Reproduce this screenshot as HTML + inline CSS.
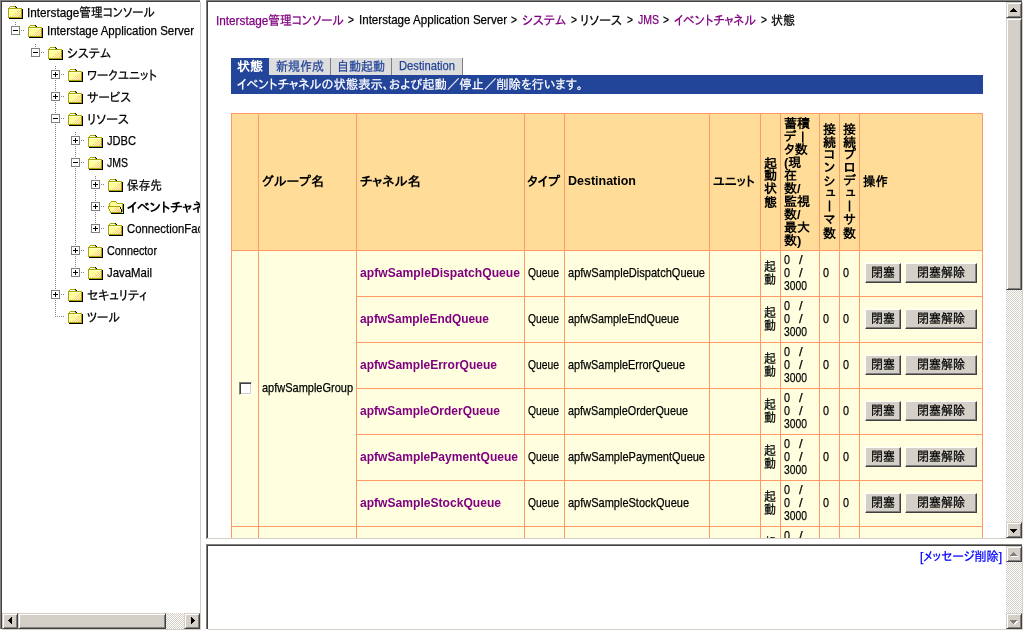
<!DOCTYPE html>
<html lang="ja"><head><meta charset="utf-8"><title>Interstage管理コンソール</title>
<style>
html,body{margin:0;padding:0}
body{width:1024px;height:630px;position:relative;overflow:hidden;background:#fff;
 font-family:"Liberation Sans","IPAPGothic","IPAGothic",sans-serif;font-size:13px;line-height:13px;color:#000}
.frame{position:absolute;overflow:hidden;background:#fff}
.view{position:absolute;overflow:hidden}
.r{position:absolute}
.t{position:absolute;white-space:nowrap;line-height:13px;font-size:13px;transform-origin:0 0}
.frame{will-change:transform}
.t{-webkit-text-stroke:0.25px}
.b{font-weight:bold;-webkit-text-stroke:0}
.v{writing-mode:vertical-rl;line-height:13px;letter-spacing:0;font-family:"Liberation Sans","IPAGothic",sans-serif}
.vv{display:inline-block;writing-mode:vertical-rl;line-height:13px;vertical-align:top}
.ic{position:absolute}
.vd{position:absolute;width:1px;background:repeating-linear-gradient(to bottom,#808080 0,#808080 1px,transparent 1px,transparent 2px)}
.hd{position:absolute;height:1px;background:repeating-linear-gradient(to right,#808080 0,#808080 1px,transparent 1px,transparent 2px)}
.bx{position:absolute;width:7px;height:7px;border:1px solid #808080;background:#fff}
.bx i{position:absolute;left:1px;top:3px;width:5px;height:1px;background:#000}
.bx b{position:absolute;left:3px;top:1px;width:1px;height:5px;background:#000}
.sb{position:absolute;background:#d4d0c8;border:1px solid;border-color:#d4d0c8 #404040 #404040 #d4d0c8;box-shadow:inset 1px 1px 0 #fff,inset -1px -1px 0 #808080}
.sb svg{position:absolute;left:0;top:0}
.tr{position:absolute;background:repeating-conic-gradient(#fff 0 25%,#d4d0c8 0 50%) 0 0/2px 2px}
.btn{position:absolute;box-sizing:border-box;margin:0;padding:0;font:inherit;color:#000;appearance:none;-webkit-appearance:none;border-radius:0;overflow:hidden;background:#d4d0c8;border:1px solid;border-color:#fff #404040 #404040 #fff;box-shadow:inset -1px -1px 0 #808080}
a{text-decoration:none;color:inherit}
.cb{position:absolute;box-sizing:content-box;margin:0;padding:0;appearance:none;-webkit-appearance:none;border-radius:0;width:11px;height:11px;background:#fff;border:1px solid;border-color:#808080 #fff #fff #808080;box-shadow:inset 1px 1px 0 #404040,inset -1px -1px 0 #d4d0c8}
</style></head>
<body>
<div class="frame" style="left:0;top:0;width:202px;height:630px">
<div class="r" style="left:0px;top:0px;width:200px;height:1px;background:#808080;"></div>
<div class="r" style="left:0px;top:0px;width:1px;height:629px;background:#808080;"></div>
<div class="r" style="left:1px;top:1px;width:199px;height:1px;background:#404040;"></div>
<div class="r" style="left:1px;top:1px;width:1px;height:628px;background:#404040;"></div>
<div class="r" style="left:200px;top:2px;width:1px;height:628px;background:#d4d0c8;"></div>
<div class="r" style="left:2px;top:629px;width:199px;height:1px;background:#d4d0c8;"></div>
<div class="view" style="left:2px;top:2px;width:198px;height:611px">
<div class="vd" style="left:13px;top:20px;height:9px"></div>
<div class="vd" style="left:33px;top:42px;height:9px"></div>
<div class="vd" style="left:53px;top:64px;height:251px"></div>
<div class="vd" style="left:73px;top:130px;height:141px"></div>
<div class="vd" style="left:93px;top:174px;height:53px"></div>
<svg class="ic" style="left:6px;top:4px" width="15" height="13" viewBox="0 0 15 13" shape-rendering="crispEdges"><rect x="2" y="0" width="5" height="1" fill="#a8a800"/><rect x="7" y="0" width="1" height="1" fill="#000"/><rect x="1" y="1" width="1" height="1" fill="#a8a800"/><rect x="2" y="1" width="5" height="1" fill="#ffffe8"/><rect x="7" y="1" width="1" height="1" fill="#a8a800"/><rect x="8" y="1" width="1" height="1" fill="#000"/><rect x="0" y="2" width="14" height="10" fill="#a8a800"/><rect x="1" y="3" width="12" height="8" fill="#ffff99"/><rect x="1" y="3" width="12" height="1" fill="#ffffd0"/><rect x="1" y="3" width="1" height="8" fill="#ffffd0"/><path d="M12 4h1v1h-1zM9 5h1v1h-1zM11 5h1v1h-1zM10 6h1v1h-1zM12 6h1v1h-1zM7 7h1v1h-1zM9 7h1v1h-1zM11 7h1v1h-1zM8 8h1v1h-1zM10 8h1v1h-1zM12 8h1v1h-1zM5 9h1v1h-1zM7 9h1v1h-1zM9 9h1v1h-1zM11 9h2v1h-2zM2 10h1v1h-1zM4 10h1v1h-1zM6 10h1v1h-1zM8 10h1v1h-1zM10 10h3v1h-3z" fill="#ffcc99"/><rect x="14" y="3" width="1" height="10" fill="#000"/><rect x="1" y="12" width="14" height="1" fill="#000"/></svg>
<span class="t" style="left:25px;top:4px;transform:scaleX(0.9043);">Interstage管理コンソール</span>
<div class="hd" style="left:19px;top:28px;width:3px"></div>
<div class="bx" style="left:9px;top:24px"><i></i></div>
<svg class="ic" style="left:26px;top:23px" width="15" height="13" viewBox="0 0 15 13" shape-rendering="crispEdges"><rect x="2" y="0" width="5" height="1" fill="#a8a800"/><rect x="7" y="0" width="1" height="1" fill="#000"/><rect x="1" y="1" width="1" height="1" fill="#a8a800"/><rect x="2" y="1" width="5" height="1" fill="#ffffe8"/><rect x="7" y="1" width="1" height="1" fill="#a8a800"/><rect x="8" y="1" width="1" height="1" fill="#000"/><rect x="0" y="2" width="14" height="10" fill="#a8a800"/><rect x="1" y="3" width="12" height="8" fill="#ffff99"/><rect x="1" y="3" width="12" height="1" fill="#ffffd0"/><rect x="1" y="3" width="1" height="8" fill="#ffffd0"/><path d="M12 4h1v1h-1zM9 5h1v1h-1zM11 5h1v1h-1zM10 6h1v1h-1zM12 6h1v1h-1zM7 7h1v1h-1zM9 7h1v1h-1zM11 7h1v1h-1zM8 8h1v1h-1zM10 8h1v1h-1zM12 8h1v1h-1zM5 9h1v1h-1zM7 9h1v1h-1zM9 9h1v1h-1zM11 9h2v1h-2zM2 10h1v1h-1zM4 10h1v1h-1zM6 10h1v1h-1zM8 10h1v1h-1zM10 10h3v1h-3z" fill="#ffcc99"/><rect x="14" y="3" width="1" height="10" fill="#000"/><rect x="1" y="12" width="14" height="1" fill="#000"/></svg>
<span class="t" style="left:45px;top:22px;transform:scaleX(0.8844);">Interstage Application Server</span>
<div class="hd" style="left:39px;top:50px;width:3px"></div>
<div class="bx" style="left:29px;top:46px"><i></i></div>
<svg class="ic" style="left:46px;top:45px" width="15" height="13" viewBox="0 0 15 13" shape-rendering="crispEdges"><rect x="2" y="0" width="5" height="1" fill="#a8a800"/><rect x="7" y="0" width="1" height="1" fill="#000"/><rect x="1" y="1" width="1" height="1" fill="#a8a800"/><rect x="2" y="1" width="5" height="1" fill="#ffffe8"/><rect x="7" y="1" width="1" height="1" fill="#a8a800"/><rect x="8" y="1" width="1" height="1" fill="#000"/><rect x="0" y="2" width="14" height="10" fill="#a8a800"/><rect x="1" y="3" width="12" height="8" fill="#ffff99"/><rect x="1" y="3" width="12" height="1" fill="#ffffd0"/><rect x="1" y="3" width="1" height="8" fill="#ffffd0"/><path d="M12 4h1v1h-1zM9 5h1v1h-1zM11 5h1v1h-1zM10 6h1v1h-1zM12 6h1v1h-1zM7 7h1v1h-1zM9 7h1v1h-1zM11 7h1v1h-1zM8 8h1v1h-1zM10 8h1v1h-1zM12 8h1v1h-1zM5 9h1v1h-1zM7 9h1v1h-1zM9 9h1v1h-1zM11 9h2v1h-2zM2 10h1v1h-1zM4 10h1v1h-1zM6 10h1v1h-1zM8 10h1v1h-1zM10 10h3v1h-3z" fill="#ffcc99"/><rect x="14" y="3" width="1" height="10" fill="#000"/><rect x="1" y="12" width="14" height="1" fill="#000"/></svg>
<span class="t" style="left:65px;top:45px;transform:scaleX(0.9428);">システム</span>
<div class="hd" style="left:59px;top:72px;width:3px"></div>
<div class="bx" style="left:49px;top:68px"><i></i><b></b></div>
<svg class="ic" style="left:66px;top:67px" width="15" height="13" viewBox="0 0 15 13" shape-rendering="crispEdges"><rect x="2" y="0" width="5" height="1" fill="#a8a800"/><rect x="7" y="0" width="1" height="1" fill="#000"/><rect x="1" y="1" width="1" height="1" fill="#a8a800"/><rect x="2" y="1" width="5" height="1" fill="#ffffe8"/><rect x="7" y="1" width="1" height="1" fill="#a8a800"/><rect x="8" y="1" width="1" height="1" fill="#000"/><rect x="0" y="2" width="14" height="10" fill="#a8a800"/><rect x="1" y="3" width="12" height="8" fill="#ffff99"/><rect x="1" y="3" width="12" height="1" fill="#ffffd0"/><rect x="1" y="3" width="1" height="8" fill="#ffffd0"/><path d="M12 4h1v1h-1zM9 5h1v1h-1zM11 5h1v1h-1zM10 6h1v1h-1zM12 6h1v1h-1zM7 7h1v1h-1zM9 7h1v1h-1zM11 7h1v1h-1zM8 8h1v1h-1zM10 8h1v1h-1zM12 8h1v1h-1zM5 9h1v1h-1zM7 9h1v1h-1zM9 9h1v1h-1zM11 9h2v1h-2zM2 10h1v1h-1zM4 10h1v1h-1zM6 10h1v1h-1zM8 10h1v1h-1zM10 10h3v1h-3z" fill="#ffcc99"/><rect x="14" y="3" width="1" height="10" fill="#000"/><rect x="1" y="12" width="14" height="1" fill="#000"/></svg>
<span class="t" style="left:85px;top:67px;transform:scaleX(0.9220);">ワークユニット</span>
<div class="hd" style="left:59px;top:94px;width:3px"></div>
<div class="bx" style="left:49px;top:90px"><i></i><b></b></div>
<svg class="ic" style="left:66px;top:89px" width="15" height="13" viewBox="0 0 15 13" shape-rendering="crispEdges"><rect x="2" y="0" width="5" height="1" fill="#a8a800"/><rect x="7" y="0" width="1" height="1" fill="#000"/><rect x="1" y="1" width="1" height="1" fill="#a8a800"/><rect x="2" y="1" width="5" height="1" fill="#ffffe8"/><rect x="7" y="1" width="1" height="1" fill="#a8a800"/><rect x="8" y="1" width="1" height="1" fill="#000"/><rect x="0" y="2" width="14" height="10" fill="#a8a800"/><rect x="1" y="3" width="12" height="8" fill="#ffff99"/><rect x="1" y="3" width="12" height="1" fill="#ffffd0"/><rect x="1" y="3" width="1" height="8" fill="#ffffd0"/><path d="M12 4h1v1h-1zM9 5h1v1h-1zM11 5h1v1h-1zM10 6h1v1h-1zM12 6h1v1h-1zM7 7h1v1h-1zM9 7h1v1h-1zM11 7h1v1h-1zM8 8h1v1h-1zM10 8h1v1h-1zM12 8h1v1h-1zM5 9h1v1h-1zM7 9h1v1h-1zM9 9h1v1h-1zM11 9h2v1h-2zM2 10h1v1h-1zM4 10h1v1h-1zM6 10h1v1h-1zM8 10h1v1h-1zM10 10h3v1h-3z" fill="#ffcc99"/><rect x="14" y="3" width="1" height="10" fill="#000"/><rect x="1" y="12" width="14" height="1" fill="#000"/></svg>
<span class="t" style="left:85px;top:89px;transform:scaleX(0.9170);">サービス</span>
<div class="hd" style="left:59px;top:116px;width:3px"></div>
<div class="bx" style="left:49px;top:112px"><i></i></div>
<svg class="ic" style="left:66px;top:111px" width="15" height="13" viewBox="0 0 15 13" shape-rendering="crispEdges"><rect x="2" y="0" width="5" height="1" fill="#a8a800"/><rect x="7" y="0" width="1" height="1" fill="#000"/><rect x="1" y="1" width="1" height="1" fill="#a8a800"/><rect x="2" y="1" width="5" height="1" fill="#ffffe8"/><rect x="7" y="1" width="1" height="1" fill="#a8a800"/><rect x="8" y="1" width="1" height="1" fill="#000"/><rect x="0" y="2" width="14" height="10" fill="#a8a800"/><rect x="1" y="3" width="12" height="8" fill="#ffff99"/><rect x="1" y="3" width="12" height="1" fill="#ffffd0"/><rect x="1" y="3" width="1" height="8" fill="#ffffd0"/><path d="M12 4h1v1h-1zM9 5h1v1h-1zM11 5h1v1h-1zM10 6h1v1h-1zM12 6h1v1h-1zM7 7h1v1h-1zM9 7h1v1h-1zM11 7h1v1h-1zM8 8h1v1h-1zM10 8h1v1h-1zM12 8h1v1h-1zM5 9h1v1h-1zM7 9h1v1h-1zM9 9h1v1h-1zM11 9h2v1h-2zM2 10h1v1h-1zM4 10h1v1h-1zM6 10h1v1h-1zM8 10h1v1h-1zM10 10h3v1h-3z" fill="#ffcc99"/><rect x="14" y="3" width="1" height="10" fill="#000"/><rect x="1" y="12" width="14" height="1" fill="#000"/></svg>
<span class="t" style="left:85px;top:111px;transform:scaleX(0.9529);">リソース</span>
<div class="hd" style="left:79px;top:138px;width:3px"></div>
<div class="bx" style="left:69px;top:134px"><i></i><b></b></div>
<svg class="ic" style="left:86px;top:133px" width="15" height="13" viewBox="0 0 15 13" shape-rendering="crispEdges"><rect x="2" y="0" width="5" height="1" fill="#a8a800"/><rect x="7" y="0" width="1" height="1" fill="#000"/><rect x="1" y="1" width="1" height="1" fill="#a8a800"/><rect x="2" y="1" width="5" height="1" fill="#ffffe8"/><rect x="7" y="1" width="1" height="1" fill="#a8a800"/><rect x="8" y="1" width="1" height="1" fill="#000"/><rect x="0" y="2" width="14" height="10" fill="#a8a800"/><rect x="1" y="3" width="12" height="8" fill="#ffff99"/><rect x="1" y="3" width="12" height="1" fill="#ffffd0"/><rect x="1" y="3" width="1" height="8" fill="#ffffd0"/><path d="M12 4h1v1h-1zM9 5h1v1h-1zM11 5h1v1h-1zM10 6h1v1h-1zM12 6h1v1h-1zM7 7h1v1h-1zM9 7h1v1h-1zM11 7h1v1h-1zM8 8h1v1h-1zM10 8h1v1h-1zM12 8h1v1h-1zM5 9h1v1h-1zM7 9h1v1h-1zM9 9h1v1h-1zM11 9h2v1h-2zM2 10h1v1h-1zM4 10h1v1h-1zM6 10h1v1h-1zM8 10h1v1h-1zM10 10h3v1h-3z" fill="#ffcc99"/><rect x="14" y="3" width="1" height="10" fill="#000"/><rect x="1" y="12" width="14" height="1" fill="#000"/></svg>
<span class="t" style="left:105px;top:132px;transform:scaleX(0.8541);">JDBC</span>
<div class="hd" style="left:79px;top:160px;width:3px"></div>
<div class="bx" style="left:69px;top:156px"><i></i></div>
<svg class="ic" style="left:86px;top:155px" width="15" height="13" viewBox="0 0 15 13" shape-rendering="crispEdges"><rect x="2" y="0" width="5" height="1" fill="#a8a800"/><rect x="7" y="0" width="1" height="1" fill="#000"/><rect x="1" y="1" width="1" height="1" fill="#a8a800"/><rect x="2" y="1" width="5" height="1" fill="#ffffe8"/><rect x="7" y="1" width="1" height="1" fill="#a8a800"/><rect x="8" y="1" width="1" height="1" fill="#000"/><rect x="0" y="2" width="14" height="10" fill="#a8a800"/><rect x="1" y="3" width="12" height="8" fill="#ffff99"/><rect x="1" y="3" width="12" height="1" fill="#ffffd0"/><rect x="1" y="3" width="1" height="8" fill="#ffffd0"/><path d="M12 4h1v1h-1zM9 5h1v1h-1zM11 5h1v1h-1zM10 6h1v1h-1zM12 6h1v1h-1zM7 7h1v1h-1zM9 7h1v1h-1zM11 7h1v1h-1zM8 8h1v1h-1zM10 8h1v1h-1zM12 8h1v1h-1zM5 9h1v1h-1zM7 9h1v1h-1zM9 9h1v1h-1zM11 9h2v1h-2zM2 10h1v1h-1zM4 10h1v1h-1zM6 10h1v1h-1zM8 10h1v1h-1zM10 10h3v1h-3z" fill="#ffcc99"/><rect x="14" y="3" width="1" height="10" fill="#000"/><rect x="1" y="12" width="14" height="1" fill="#000"/></svg>
<span class="t" style="left:105px;top:154px;transform:scaleX(0.8077);">JMS</span>
<div class="hd" style="left:99px;top:182px;width:3px"></div>
<div class="bx" style="left:89px;top:178px"><i></i><b></b></div>
<svg class="ic" style="left:106px;top:177px" width="15" height="13" viewBox="0 0 15 13" shape-rendering="crispEdges"><rect x="2" y="0" width="5" height="1" fill="#a8a800"/><rect x="7" y="0" width="1" height="1" fill="#000"/><rect x="1" y="1" width="1" height="1" fill="#a8a800"/><rect x="2" y="1" width="5" height="1" fill="#ffffe8"/><rect x="7" y="1" width="1" height="1" fill="#a8a800"/><rect x="8" y="1" width="1" height="1" fill="#000"/><rect x="0" y="2" width="14" height="10" fill="#a8a800"/><rect x="1" y="3" width="12" height="8" fill="#ffff99"/><rect x="1" y="3" width="12" height="1" fill="#ffffd0"/><rect x="1" y="3" width="1" height="8" fill="#ffffd0"/><path d="M12 4h1v1h-1zM9 5h1v1h-1zM11 5h1v1h-1zM10 6h1v1h-1zM12 6h1v1h-1zM7 7h1v1h-1zM9 7h1v1h-1zM11 7h1v1h-1zM8 8h1v1h-1zM10 8h1v1h-1zM12 8h1v1h-1zM5 9h1v1h-1zM7 9h1v1h-1zM9 9h1v1h-1zM11 9h2v1h-2zM2 10h1v1h-1zM4 10h1v1h-1zM6 10h1v1h-1zM8 10h1v1h-1zM10 10h3v1h-3z" fill="#ffcc99"/><rect x="14" y="3" width="1" height="10" fill="#000"/><rect x="1" y="12" width="14" height="1" fill="#000"/></svg>
<span class="t" style="left:125px;top:177px;transform:scaleX(0.8974);">保存先</span>
<div class="hd" style="left:99px;top:204px;width:3px"></div>
<div class="bx" style="left:89px;top:200px"><i></i><b></b></div>
<svg class="ic" style="left:106px;top:199px" width="16" height="13" viewBox="0 0 16 13" shape-rendering="crispEdges"><path d="M3 0h5v1h-5zM2 1h1v1h-1zM8 1h1v1h-1zM1 2h1v3h-1zM9 2h6v1h-6zM14 3h1v8h-1z" fill="#a8a800"/><path d="M3 1h5v1h-5zM2 2h7v3h-7zM9 3h5v8h-5z" fill="#ffff99"/><rect x="9" y="3" width="5" height="1" fill="#ffffe8"/><path d="M0 5h12v1h-12zM0 6h1v2h-1zM1 8h1v2h-1zM2 10h1v1h-1zM2 11h12v1h-12z" fill="#a8a800"/><path d="M1 6h11v2h-11zM2 8h11v2h-11zM3 10h10v1h-10z" fill="#ffff99"/><path d="M8 6h1v1h-1zM10 6h1v1h-1zM7 7h1v1h-1zM9 7h1v1h-1zM6 8h1v1h-1zM8 8h1v1h-1zM10 8h2v1h-2zM5 9h1v1h-1zM7 9h1v1h-1zM9 9h3v1h-3zM4 10h1v1h-1zM6 10h1v1h-1zM8 10h4v1h-4z" fill="#ffcc99"/><path d="M12 6h1v2h-1zM13 8h1v2h-1zM13 10h1v1h-1zM15 3h1v10h-1zM3 12h13v1h-13z" fill="#000"/></svg>
<span class="t b" style="left:125px;top:199px;transform:scaleX(1.0107);">イベントチャネル</span>
<div class="hd" style="left:99px;top:226px;width:3px"></div>
<div class="bx" style="left:89px;top:222px"><i></i><b></b></div>
<svg class="ic" style="left:106px;top:221px" width="15" height="13" viewBox="0 0 15 13" shape-rendering="crispEdges"><rect x="2" y="0" width="5" height="1" fill="#a8a800"/><rect x="7" y="0" width="1" height="1" fill="#000"/><rect x="1" y="1" width="1" height="1" fill="#a8a800"/><rect x="2" y="1" width="5" height="1" fill="#ffffe8"/><rect x="7" y="1" width="1" height="1" fill="#a8a800"/><rect x="8" y="1" width="1" height="1" fill="#000"/><rect x="0" y="2" width="14" height="10" fill="#a8a800"/><rect x="1" y="3" width="12" height="8" fill="#ffff99"/><rect x="1" y="3" width="12" height="1" fill="#ffffd0"/><rect x="1" y="3" width="1" height="8" fill="#ffffd0"/><path d="M12 4h1v1h-1zM9 5h1v1h-1zM11 5h1v1h-1zM10 6h1v1h-1zM12 6h1v1h-1zM7 7h1v1h-1zM9 7h1v1h-1zM11 7h1v1h-1zM8 8h1v1h-1zM10 8h1v1h-1zM12 8h1v1h-1zM5 9h1v1h-1zM7 9h1v1h-1zM9 9h1v1h-1zM11 9h2v1h-2zM2 10h1v1h-1zM4 10h1v1h-1zM6 10h1v1h-1zM8 10h1v1h-1zM10 10h3v1h-3z" fill="#ffcc99"/><rect x="14" y="3" width="1" height="10" fill="#000"/><rect x="1" y="12" width="14" height="1" fill="#000"/></svg>
<span class="t" style="left:125px;top:220px;transform:scaleX(0.8706);">ConnectionFactory</span>
<div class="hd" style="left:79px;top:248px;width:3px"></div>
<div class="bx" style="left:69px;top:244px"><i></i><b></b></div>
<svg class="ic" style="left:86px;top:243px" width="15" height="13" viewBox="0 0 15 13" shape-rendering="crispEdges"><rect x="2" y="0" width="5" height="1" fill="#a8a800"/><rect x="7" y="0" width="1" height="1" fill="#000"/><rect x="1" y="1" width="1" height="1" fill="#a8a800"/><rect x="2" y="1" width="5" height="1" fill="#ffffe8"/><rect x="7" y="1" width="1" height="1" fill="#a8a800"/><rect x="8" y="1" width="1" height="1" fill="#000"/><rect x="0" y="2" width="14" height="10" fill="#a8a800"/><rect x="1" y="3" width="12" height="8" fill="#ffff99"/><rect x="1" y="3" width="12" height="1" fill="#ffffd0"/><rect x="1" y="3" width="1" height="8" fill="#ffffd0"/><path d="M12 4h1v1h-1zM9 5h1v1h-1zM11 5h1v1h-1zM10 6h1v1h-1zM12 6h1v1h-1zM7 7h1v1h-1zM9 7h1v1h-1zM11 7h1v1h-1zM8 8h1v1h-1zM10 8h1v1h-1zM12 8h1v1h-1zM5 9h1v1h-1zM7 9h1v1h-1zM9 9h1v1h-1zM11 9h2v1h-2zM2 10h1v1h-1zM4 10h1v1h-1zM6 10h1v1h-1zM8 10h1v1h-1zM10 10h3v1h-3z" fill="#ffcc99"/><rect x="14" y="3" width="1" height="10" fill="#000"/><rect x="1" y="12" width="14" height="1" fill="#000"/></svg>
<span class="t" style="left:105px;top:242px;transform:scaleX(0.8336);">Connector</span>
<div class="hd" style="left:79px;top:270px;width:3px"></div>
<div class="bx" style="left:69px;top:266px"><i></i><b></b></div>
<svg class="ic" style="left:86px;top:265px" width="15" height="13" viewBox="0 0 15 13" shape-rendering="crispEdges"><rect x="2" y="0" width="5" height="1" fill="#a8a800"/><rect x="7" y="0" width="1" height="1" fill="#000"/><rect x="1" y="1" width="1" height="1" fill="#a8a800"/><rect x="2" y="1" width="5" height="1" fill="#ffffe8"/><rect x="7" y="1" width="1" height="1" fill="#a8a800"/><rect x="8" y="1" width="1" height="1" fill="#000"/><rect x="0" y="2" width="14" height="10" fill="#a8a800"/><rect x="1" y="3" width="12" height="8" fill="#ffff99"/><rect x="1" y="3" width="12" height="1" fill="#ffffd0"/><rect x="1" y="3" width="1" height="8" fill="#ffffd0"/><path d="M12 4h1v1h-1zM9 5h1v1h-1zM11 5h1v1h-1zM10 6h1v1h-1zM12 6h1v1h-1zM7 7h1v1h-1zM9 7h1v1h-1zM11 7h1v1h-1zM8 8h1v1h-1zM10 8h1v1h-1zM12 8h1v1h-1zM5 9h1v1h-1zM7 9h1v1h-1zM9 9h1v1h-1zM11 9h2v1h-2zM2 10h1v1h-1zM4 10h1v1h-1zM6 10h1v1h-1zM8 10h1v1h-1zM10 10h3v1h-3z" fill="#ffcc99"/><rect x="14" y="3" width="1" height="10" fill="#000"/><rect x="1" y="12" width="14" height="1" fill="#000"/></svg>
<span class="t" style="left:105px;top:264px;transform:scaleX(0.8772);">JavaMail</span>
<div class="hd" style="left:59px;top:292px;width:3px"></div>
<div class="bx" style="left:49px;top:288px"><i></i><b></b></div>
<svg class="ic" style="left:66px;top:287px" width="15" height="13" viewBox="0 0 15 13" shape-rendering="crispEdges"><rect x="2" y="0" width="5" height="1" fill="#a8a800"/><rect x="7" y="0" width="1" height="1" fill="#000"/><rect x="1" y="1" width="1" height="1" fill="#a8a800"/><rect x="2" y="1" width="5" height="1" fill="#ffffe8"/><rect x="7" y="1" width="1" height="1" fill="#a8a800"/><rect x="8" y="1" width="1" height="1" fill="#000"/><rect x="0" y="2" width="14" height="10" fill="#a8a800"/><rect x="1" y="3" width="12" height="8" fill="#ffff99"/><rect x="1" y="3" width="12" height="1" fill="#ffffd0"/><rect x="1" y="3" width="1" height="8" fill="#ffffd0"/><path d="M12 4h1v1h-1zM9 5h1v1h-1zM11 5h1v1h-1zM10 6h1v1h-1zM12 6h1v1h-1zM7 7h1v1h-1zM9 7h1v1h-1zM11 7h1v1h-1zM8 8h1v1h-1zM10 8h1v1h-1zM12 8h1v1h-1zM5 9h1v1h-1zM7 9h1v1h-1zM9 9h1v1h-1zM11 9h2v1h-2zM2 10h1v1h-1zM4 10h1v1h-1zM6 10h1v1h-1zM8 10h1v1h-1zM10 10h3v1h-3z" fill="#ffcc99"/><rect x="14" y="3" width="1" height="10" fill="#000"/><rect x="1" y="12" width="14" height="1" fill="#000"/></svg>
<span class="t" style="left:85px;top:287px;transform:scaleX(0.9398);">セキュリティ</span>
<div class="hd" style="left:53px;top:314px;width:9px"></div>
<svg class="ic" style="left:66px;top:309px" width="15" height="13" viewBox="0 0 15 13" shape-rendering="crispEdges"><rect x="2" y="0" width="5" height="1" fill="#a8a800"/><rect x="7" y="0" width="1" height="1" fill="#000"/><rect x="1" y="1" width="1" height="1" fill="#a8a800"/><rect x="2" y="1" width="5" height="1" fill="#ffffe8"/><rect x="7" y="1" width="1" height="1" fill="#a8a800"/><rect x="8" y="1" width="1" height="1" fill="#000"/><rect x="0" y="2" width="14" height="10" fill="#a8a800"/><rect x="1" y="3" width="12" height="8" fill="#ffff99"/><rect x="1" y="3" width="12" height="1" fill="#ffffd0"/><rect x="1" y="3" width="1" height="8" fill="#ffffd0"/><path d="M12 4h1v1h-1zM9 5h1v1h-1zM11 5h1v1h-1zM10 6h1v1h-1zM12 6h1v1h-1zM7 7h1v1h-1zM9 7h1v1h-1zM11 7h1v1h-1zM8 8h1v1h-1zM10 8h1v1h-1zM12 8h1v1h-1zM5 9h1v1h-1zM7 9h1v1h-1zM9 9h1v1h-1zM11 9h2v1h-2zM2 10h1v1h-1zM4 10h1v1h-1zM6 10h1v1h-1zM8 10h1v1h-1zM10 10h3v1h-3z" fill="#ffcc99"/><rect x="14" y="3" width="1" height="10" fill="#000"/><rect x="1" y="12" width="14" height="1" fill="#000"/></svg>
<span class="t" style="left:85px;top:309px;transform:scaleX(0.9163);">ツール</span>
</div>
<div class="tr" style="left:2px;top:613px;width:198px;height:16px"></div>
<div class="sb" style="left:2px;top:613px;width:14px;height:14px"><svg width="14" height="14" viewBox="0 0 14 14" shape-rendering="crispEdges"><path d="M8 3h1v7h-1zM7 4h1v5h-1zM6 5h1v3h-1zM5 6h1v1h-1z" fill="#000"/></svg></div>
<div class="sb" style="left:18px;top:613px;width:146px;height:14px"></div>
<div class="sb" style="left:184px;top:613px;width:14px;height:14px"><svg width="14" height="14" viewBox="0 0 14 14" shape-rendering="crispEdges"><path d="M6 3h1v7h-1zM7 4h1v5h-1zM8 5h1v3h-1zM9 6h1v1h-1z" fill="#000"/></svg></div>
</div>
<div class="frame" style="left:206px;top:0;width:818px;height:540px">
<div class="r" style="left:0px;top:0px;width:816px;height:1px;background:#808080;"></div>
<div class="r" style="left:0px;top:0px;width:1px;height:539px;background:#808080;"></div>
<div class="r" style="left:1px;top:1px;width:815px;height:1px;background:#404040;"></div>
<div class="r" style="left:1px;top:1px;width:1px;height:537px;background:#404040;"></div>
<div class="r" style="left:816px;top:2px;width:1px;height:537px;background:#d4d0c8;"></div>
<div class="r" style="left:2px;top:538px;width:815px;height:1px;background:#d4d0c8;"></div>
<div class="view" style="left:2px;top:2px;width:798px;height:536px">
<a href="#" class="t" style="left:8px;top:12px;color:#800080;transform:scaleX(0.9043);">Interstage管理コンソール</a>
<span class="t" style="left:140px;top:11px;transform:scaleX(0.7901);">&gt;</span>
<span class="t" style="left:151px;top:11px;transform:scaleX(0.8904);">Interstage Application Server</span>
<span class="t" style="left:303px;top:11px;transform:scaleX(0.7901);">&gt;</span>
<a href="#" class="t" style="left:314px;top:12px;color:#800080;transform:scaleX(0.9428);">システム</a>
<span class="t" style="left:363px;top:11px;transform:scaleX(0.7901);">&gt;</span>
<span class="t" style="left:372px;top:12px;transform:scaleX(0.9529);">リソース</span>
<span class="t" style="left:419px;top:11px;transform:scaleX(0.7901);">&gt;</span>
<a href="#" class="t" style="left:430px;top:11px;color:#800080;transform:scaleX(0.8077);">JMS</a>
<span class="t" style="left:455px;top:11px;transform:scaleX(0.7901);">&gt;</span>
<a href="#" class="t" style="left:466px;top:12px;color:#800080;transform:scaleX(0.9209);">イベントチャネル</a>
<span class="t" style="left:553px;top:11px;transform:scaleX(0.7901);">&gt;</span>
<span class="t" style="left:563px;top:12px;transform:scaleX(0.9231);">状態</span>
<div class="r" style="left:23px;top:56px;width:38px;height:17px;background:#224499;"></div>
<div class="r" style="left:61px;top:56px;width:194px;height:17px;background:#dddddd;"></div>
<div class="r" style="left:122px;top:56px;width:1px;height:17px;background:#808080;"></div>
<div class="r" style="left:183px;top:56px;width:1px;height:17px;background:#808080;"></div>
<div class="r" style="left:254px;top:56px;width:1px;height:17px;background:#808080;"></div>
<div class="r" style="left:23px;top:73px;width:752px;height:19px;background:#224499;"></div>
<span class="t b" style="left:29px;top:58px;color:#fff;transform:scaleX(1.0000);">状態</span>
<a href="#" class="t" style="left:68px;top:58px;color:#224499;transform:scaleX(0.9231);">新規作成</a>
<a href="#" class="t" style="left:129px;top:58px;color:#224499;transform:scaleX(0.9231);">自動起動</a>
<a href="#" class="t" style="left:191px;top:57px;color:#224499;transform:scaleX(0.8609);">Destination</a>
<span class="t" style="left:29px;top:76px;color:#fff;transform:scaleX(0.9492);">イベントチャネルの状態表示、および起動／停止／削除を行います。</span>
<div class="r" style="left:23px;top:111px;width:752px;height:430px;background:#ff9966;"></div>
<div class="r" style="left:24px;top:112px;width:26px;height:136px;background:#ffdd99;"></div>
<div class="r" style="left:51px;top:112px;width:97px;height:136px;background:#ffdd99;"></div>
<div class="r" style="left:149px;top:112px;width:167px;height:136px;background:#ffdd99;"></div>
<div class="r" style="left:317px;top:112px;width:39px;height:136px;background:#ffdd99;"></div>
<div class="r" style="left:357px;top:112px;width:144px;height:136px;background:#ffdd99;"></div>
<div class="r" style="left:502px;top:112px;width:50px;height:136px;background:#ffdd99;"></div>
<div class="r" style="left:553px;top:112px;width:19px;height:136px;background:#ffdd99;"></div>
<div class="r" style="left:573px;top:112px;width:38px;height:136px;background:#ffdd99;"></div>
<div class="r" style="left:612px;top:112px;width:19px;height:136px;background:#ffdd99;"></div>
<div class="r" style="left:632px;top:112px;width:19px;height:136px;background:#ffdd99;"></div>
<div class="r" style="left:652px;top:112px;width:122px;height:136px;background:#ffdd99;"></div>
<div class="r" style="left:24px;top:249px;width:26px;height:275px;background:#ffffe0;"></div>
<div class="r" style="left:51px;top:249px;width:97px;height:275px;background:#ffffe0;"></div>
<div class="r" style="left:149px;top:249px;width:167px;height:45px;background:#ffffe0;"></div>
<div class="r" style="left:317px;top:249px;width:39px;height:45px;background:#ffffe0;"></div>
<div class="r" style="left:357px;top:249px;width:144px;height:45px;background:#ffffe0;"></div>
<div class="r" style="left:502px;top:249px;width:50px;height:45px;background:#ffffe0;"></div>
<div class="r" style="left:553px;top:249px;width:19px;height:45px;background:#ffffe0;"></div>
<div class="r" style="left:573px;top:249px;width:38px;height:45px;background:#ffffe0;"></div>
<div class="r" style="left:612px;top:249px;width:19px;height:45px;background:#ffffe0;"></div>
<div class="r" style="left:632px;top:249px;width:19px;height:45px;background:#ffffe0;"></div>
<div class="r" style="left:652px;top:249px;width:122px;height:45px;background:#ffffe0;"></div>
<div class="r" style="left:149px;top:295px;width:167px;height:45px;background:#ffffe0;"></div>
<div class="r" style="left:317px;top:295px;width:39px;height:45px;background:#ffffe0;"></div>
<div class="r" style="left:357px;top:295px;width:144px;height:45px;background:#ffffe0;"></div>
<div class="r" style="left:502px;top:295px;width:50px;height:45px;background:#ffffe0;"></div>
<div class="r" style="left:553px;top:295px;width:19px;height:45px;background:#ffffe0;"></div>
<div class="r" style="left:573px;top:295px;width:38px;height:45px;background:#ffffe0;"></div>
<div class="r" style="left:612px;top:295px;width:19px;height:45px;background:#ffffe0;"></div>
<div class="r" style="left:632px;top:295px;width:19px;height:45px;background:#ffffe0;"></div>
<div class="r" style="left:652px;top:295px;width:122px;height:45px;background:#ffffe0;"></div>
<div class="r" style="left:149px;top:341px;width:167px;height:45px;background:#ffffe0;"></div>
<div class="r" style="left:317px;top:341px;width:39px;height:45px;background:#ffffe0;"></div>
<div class="r" style="left:357px;top:341px;width:144px;height:45px;background:#ffffe0;"></div>
<div class="r" style="left:502px;top:341px;width:50px;height:45px;background:#ffffe0;"></div>
<div class="r" style="left:553px;top:341px;width:19px;height:45px;background:#ffffe0;"></div>
<div class="r" style="left:573px;top:341px;width:38px;height:45px;background:#ffffe0;"></div>
<div class="r" style="left:612px;top:341px;width:19px;height:45px;background:#ffffe0;"></div>
<div class="r" style="left:632px;top:341px;width:19px;height:45px;background:#ffffe0;"></div>
<div class="r" style="left:652px;top:341px;width:122px;height:45px;background:#ffffe0;"></div>
<div class="r" style="left:149px;top:387px;width:167px;height:45px;background:#ffffe0;"></div>
<div class="r" style="left:317px;top:387px;width:39px;height:45px;background:#ffffe0;"></div>
<div class="r" style="left:357px;top:387px;width:144px;height:45px;background:#ffffe0;"></div>
<div class="r" style="left:502px;top:387px;width:50px;height:45px;background:#ffffe0;"></div>
<div class="r" style="left:553px;top:387px;width:19px;height:45px;background:#ffffe0;"></div>
<div class="r" style="left:573px;top:387px;width:38px;height:45px;background:#ffffe0;"></div>
<div class="r" style="left:612px;top:387px;width:19px;height:45px;background:#ffffe0;"></div>
<div class="r" style="left:632px;top:387px;width:19px;height:45px;background:#ffffe0;"></div>
<div class="r" style="left:652px;top:387px;width:122px;height:45px;background:#ffffe0;"></div>
<div class="r" style="left:149px;top:433px;width:167px;height:45px;background:#ffffe0;"></div>
<div class="r" style="left:317px;top:433px;width:39px;height:45px;background:#ffffe0;"></div>
<div class="r" style="left:357px;top:433px;width:144px;height:45px;background:#ffffe0;"></div>
<div class="r" style="left:502px;top:433px;width:50px;height:45px;background:#ffffe0;"></div>
<div class="r" style="left:553px;top:433px;width:19px;height:45px;background:#ffffe0;"></div>
<div class="r" style="left:573px;top:433px;width:38px;height:45px;background:#ffffe0;"></div>
<div class="r" style="left:612px;top:433px;width:19px;height:45px;background:#ffffe0;"></div>
<div class="r" style="left:632px;top:433px;width:19px;height:45px;background:#ffffe0;"></div>
<div class="r" style="left:652px;top:433px;width:122px;height:45px;background:#ffffe0;"></div>
<div class="r" style="left:149px;top:479px;width:167px;height:45px;background:#ffffe0;"></div>
<div class="r" style="left:317px;top:479px;width:39px;height:45px;background:#ffffe0;"></div>
<div class="r" style="left:357px;top:479px;width:144px;height:45px;background:#ffffe0;"></div>
<div class="r" style="left:502px;top:479px;width:50px;height:45px;background:#ffffe0;"></div>
<div class="r" style="left:553px;top:479px;width:19px;height:45px;background:#ffffe0;"></div>
<div class="r" style="left:573px;top:479px;width:38px;height:45px;background:#ffffe0;"></div>
<div class="r" style="left:612px;top:479px;width:19px;height:45px;background:#ffffe0;"></div>
<div class="r" style="left:632px;top:479px;width:19px;height:45px;background:#ffffe0;"></div>
<div class="r" style="left:652px;top:479px;width:122px;height:45px;background:#ffffe0;"></div>
<div class="r" style="left:24px;top:525px;width:26px;height:45px;background:#ffffe0;"></div>
<div class="r" style="left:51px;top:525px;width:97px;height:45px;background:#ffffe0;"></div>
<div class="r" style="left:149px;top:525px;width:167px;height:45px;background:#ffffe0;"></div>
<div class="r" style="left:317px;top:525px;width:39px;height:45px;background:#ffffe0;"></div>
<div class="r" style="left:357px;top:525px;width:144px;height:45px;background:#ffffe0;"></div>
<div class="r" style="left:502px;top:525px;width:50px;height:45px;background:#ffffe0;"></div>
<div class="r" style="left:553px;top:525px;width:19px;height:45px;background:#ffffe0;"></div>
<div class="r" style="left:573px;top:525px;width:38px;height:45px;background:#ffffe0;"></div>
<div class="r" style="left:612px;top:525px;width:19px;height:45px;background:#ffffe0;"></div>
<div class="r" style="left:632px;top:525px;width:19px;height:45px;background:#ffffe0;"></div>
<div class="r" style="left:652px;top:525px;width:122px;height:45px;background:#ffffe0;"></div>
<span class="t b" style="left:54px;top:173px;transform:scaleX(1.0061);">グループ名</span>
<span class="t b" style="left:152px;top:173px;transform:scaleX(1.0290);">チャネル名</span>
<span class="t b" style="left:319px;top:173px;transform:scaleX(1.0193);">タイプ</span>
<span class="t b" style="left:360px;top:172px;transform:scaleX(0.9605);">Destination</span>
<span class="t b" style="left:505px;top:173px;transform:scaleX(0.9908);">ユニット</span>
<span class="t b" style="left:655px;top:173px;transform:scaleX(0.9615);">操作</span>
<span class="t b v" style="left:556px;top:153px;">起動状態</span>
<span class="t b v" style="left:615px;top:119px;">接続コンシューマ数</span>
<span class="t b v" style="left:635px;top:119px;">接続プロデューサ数</span>
<span class="t b" style="left:576px;top:115px;">蓄積</span>
<span class="t b" style="left:576px;top:128px;">デ<span class="vv">ー</span></span>
<span class="t b" style="left:576px;top:141px;">タ数</span>
<span class="t b" style="left:576px;top:154px;">(現</span>
<span class="t b" style="left:576px;top:167px;">在</span>
<span class="t b" style="left:576px;top:180px;">数/</span>
<span class="t b" style="left:576px;top:193px;">監視</span>
<span class="t b" style="left:576px;top:206px;">数/</span>
<span class="t b" style="left:576px;top:219px;">最大</span>
<span class="t b" style="left:576px;top:232px;">数)</span>
<a href="#" class="t b" style="left:152px;top:264px;color:#800080;transform:scaleX(0.9345);">apfwSampleDispatchQueue</a>
<span class="t" style="left:320px;top:264px;transform:scaleX(0.7939);">Queue</span>
<span class="t" style="left:360px;top:264px;transform:scaleX(0.8501);">apfwSampleDispatchQueue</span>
<a href="#" class="t b" style="left:152px;top:310px;color:#800080;transform:scaleX(0.9157);">apfwSampleEndQueue</a>
<span class="t" style="left:320px;top:310px;transform:scaleX(0.7939);">Queue</span>
<span class="t" style="left:360px;top:310px;transform:scaleX(0.8302);">apfwSampleEndQueue</span>
<a href="#" class="t b" style="left:152px;top:356px;color:#800080;transform:scaleX(0.9250);">apfwSampleErrorQueue</a>
<span class="t" style="left:320px;top:356px;transform:scaleX(0.7939);">Queue</span>
<span class="t" style="left:360px;top:356px;transform:scaleX(0.8389);">apfwSampleErrorQueue</span>
<a href="#" class="t b" style="left:152px;top:402px;color:#800080;transform:scaleX(0.9228);">apfwSampleOrderQueue</a>
<span class="t" style="left:320px;top:402px;transform:scaleX(0.7939);">Queue</span>
<span class="t" style="left:360px;top:402px;transform:scaleX(0.8344);">apfwSampleOrderQueue</span>
<a href="#" class="t b" style="left:152px;top:448px;color:#800080;transform:scaleX(0.9267);">apfwSamplePaymentQueue</a>
<span class="t" style="left:320px;top:448px;transform:scaleX(0.7939);">Queue</span>
<span class="t" style="left:360px;top:448px;transform:scaleX(0.8463);">apfwSamplePaymentQueue</span>
<a href="#" class="t b" style="left:152px;top:494px;color:#800080;transform:scaleX(0.9294);">apfwSampleStockQueue</a>
<span class="t" style="left:320px;top:494px;transform:scaleX(0.7939);">Queue</span>
<span class="t" style="left:360px;top:494px;transform:scaleX(0.8456);">apfwSampleStockQueue</span>
<span class="t" style="left:556px;top:258px;transform:scaleX(0.9231);">起</span>
<span class="t" style="left:556px;top:271px;transform:scaleX(0.9231);">動</span>
<span class="t" style="left:576px;top:251px;transform:scaleX(0.8294);">0</span>
<span class="t" style="left:591px;top:251px;">/</span>
<span class="t" style="left:576px;top:264px;transform:scaleX(0.8294);">0</span>
<span class="t" style="left:591px;top:264px;">/</span>
<span class="t" style="left:576px;top:277px;transform:scaleX(0.7952);">3000</span>
<span class="t" style="left:615px;top:264px;transform:scaleX(0.8294);">0</span>
<span class="t" style="left:635px;top:264px;transform:scaleX(0.8294);">0</span>
<button type="button" class="btn" style="left:657px;top:261px;width:36px;height:20px">
<span class="t" style="left:5px;top:2px;transform:scaleX(0.9231);">閉塞</span>
</button>
<button type="button" class="btn" style="left:697px;top:261px;width:72px;height:20px">
<span class="t" style="left:11px;top:2px;transform:scaleX(0.9231);">閉塞解除</span>
</button>
<span class="t" style="left:556px;top:304px;transform:scaleX(0.9231);">起</span>
<span class="t" style="left:556px;top:317px;transform:scaleX(0.9231);">動</span>
<span class="t" style="left:576px;top:297px;transform:scaleX(0.8294);">0</span>
<span class="t" style="left:591px;top:297px;">/</span>
<span class="t" style="left:576px;top:310px;transform:scaleX(0.8294);">0</span>
<span class="t" style="left:591px;top:310px;">/</span>
<span class="t" style="left:576px;top:323px;transform:scaleX(0.7952);">3000</span>
<span class="t" style="left:615px;top:310px;transform:scaleX(0.8294);">0</span>
<span class="t" style="left:635px;top:310px;transform:scaleX(0.8294);">0</span>
<button type="button" class="btn" style="left:657px;top:307px;width:36px;height:20px">
<span class="t" style="left:5px;top:2px;transform:scaleX(0.9231);">閉塞</span>
</button>
<button type="button" class="btn" style="left:697px;top:307px;width:72px;height:20px">
<span class="t" style="left:11px;top:2px;transform:scaleX(0.9231);">閉塞解除</span>
</button>
<span class="t" style="left:556px;top:350px;transform:scaleX(0.9231);">起</span>
<span class="t" style="left:556px;top:363px;transform:scaleX(0.9231);">動</span>
<span class="t" style="left:576px;top:343px;transform:scaleX(0.8294);">0</span>
<span class="t" style="left:591px;top:343px;">/</span>
<span class="t" style="left:576px;top:356px;transform:scaleX(0.8294);">0</span>
<span class="t" style="left:591px;top:356px;">/</span>
<span class="t" style="left:576px;top:369px;transform:scaleX(0.7952);">3000</span>
<span class="t" style="left:615px;top:356px;transform:scaleX(0.8294);">0</span>
<span class="t" style="left:635px;top:356px;transform:scaleX(0.8294);">0</span>
<button type="button" class="btn" style="left:657px;top:353px;width:36px;height:20px">
<span class="t" style="left:5px;top:2px;transform:scaleX(0.9231);">閉塞</span>
</button>
<button type="button" class="btn" style="left:697px;top:353px;width:72px;height:20px">
<span class="t" style="left:11px;top:2px;transform:scaleX(0.9231);">閉塞解除</span>
</button>
<span class="t" style="left:556px;top:396px;transform:scaleX(0.9231);">起</span>
<span class="t" style="left:556px;top:409px;transform:scaleX(0.9231);">動</span>
<span class="t" style="left:576px;top:389px;transform:scaleX(0.8294);">0</span>
<span class="t" style="left:591px;top:389px;">/</span>
<span class="t" style="left:576px;top:402px;transform:scaleX(0.8294);">0</span>
<span class="t" style="left:591px;top:402px;">/</span>
<span class="t" style="left:576px;top:415px;transform:scaleX(0.7952);">3000</span>
<span class="t" style="left:615px;top:402px;transform:scaleX(0.8294);">0</span>
<span class="t" style="left:635px;top:402px;transform:scaleX(0.8294);">0</span>
<button type="button" class="btn" style="left:657px;top:399px;width:36px;height:20px">
<span class="t" style="left:5px;top:2px;transform:scaleX(0.9231);">閉塞</span>
</button>
<button type="button" class="btn" style="left:697px;top:399px;width:72px;height:20px">
<span class="t" style="left:11px;top:2px;transform:scaleX(0.9231);">閉塞解除</span>
</button>
<span class="t" style="left:556px;top:442px;transform:scaleX(0.9231);">起</span>
<span class="t" style="left:556px;top:455px;transform:scaleX(0.9231);">動</span>
<span class="t" style="left:576px;top:435px;transform:scaleX(0.8294);">0</span>
<span class="t" style="left:591px;top:435px;">/</span>
<span class="t" style="left:576px;top:448px;transform:scaleX(0.8294);">0</span>
<span class="t" style="left:591px;top:448px;">/</span>
<span class="t" style="left:576px;top:461px;transform:scaleX(0.7952);">3000</span>
<span class="t" style="left:615px;top:448px;transform:scaleX(0.8294);">0</span>
<span class="t" style="left:635px;top:448px;transform:scaleX(0.8294);">0</span>
<button type="button" class="btn" style="left:657px;top:445px;width:36px;height:20px">
<span class="t" style="left:5px;top:2px;transform:scaleX(0.9231);">閉塞</span>
</button>
<button type="button" class="btn" style="left:697px;top:445px;width:72px;height:20px">
<span class="t" style="left:11px;top:2px;transform:scaleX(0.9231);">閉塞解除</span>
</button>
<span class="t" style="left:556px;top:488px;transform:scaleX(0.9231);">起</span>
<span class="t" style="left:556px;top:501px;transform:scaleX(0.9231);">動</span>
<span class="t" style="left:576px;top:481px;transform:scaleX(0.8294);">0</span>
<span class="t" style="left:591px;top:481px;">/</span>
<span class="t" style="left:576px;top:494px;transform:scaleX(0.8294);">0</span>
<span class="t" style="left:591px;top:494px;">/</span>
<span class="t" style="left:576px;top:507px;transform:scaleX(0.7952);">3000</span>
<span class="t" style="left:615px;top:494px;transform:scaleX(0.8294);">0</span>
<span class="t" style="left:635px;top:494px;transform:scaleX(0.8294);">0</span>
<button type="button" class="btn" style="left:657px;top:491px;width:36px;height:20px">
<span class="t" style="left:5px;top:2px;transform:scaleX(0.9231);">閉塞</span>
</button>
<button type="button" class="btn" style="left:697px;top:491px;width:72px;height:20px">
<span class="t" style="left:11px;top:2px;transform:scaleX(0.9231);">閉塞解除</span>
</button>
<span class="t" style="left:556px;top:534px;transform:scaleX(0.9231);">起</span>
<span class="t" style="left:556px;top:547px;transform:scaleX(0.9231);">動</span>
<span class="t" style="left:576px;top:527px;transform:scaleX(0.8294);">0</span>
<span class="t" style="left:591px;top:527px;">/</span>
<span class="t" style="left:576px;top:540px;transform:scaleX(0.8294);">0</span>
<span class="t" style="left:591px;top:540px;">/</span>
<span class="t" style="left:576px;top:553px;transform:scaleX(0.7952);">3000</span>
<span class="t" style="left:615px;top:540px;transform:scaleX(0.8294);">0</span>
<span class="t" style="left:635px;top:540px;transform:scaleX(0.8294);">0</span>
<button type="button" class="btn" style="left:657px;top:537px;width:36px;height:20px">
<span class="t" style="left:5px;top:2px;transform:scaleX(0.9231);">閉塞</span>
</button>
<button type="button" class="btn" style="left:697px;top:537px;width:72px;height:20px">
<span class="t" style="left:11px;top:2px;transform:scaleX(0.9231);">閉塞解除</span>
</button>
<input type="checkbox" class="cb" style="left:31px;top:380px">
<span class="t" style="left:54px;top:379px;transform:scaleX(0.8452);">apfwSampleGroup</span>
</div>
<div class="tr" style="left:800px;top:2px;width:16px;height:536px"></div>
<div class="sb" style="left:800px;top:2px;width:14px;height:14px"><svg width="14" height="14" viewBox="0 0 14 14" shape-rendering="crispEdges"><path d="M6 5h1v1h-1zM5 6h3v1h-3zM4 7h5v1h-5zM3 8h7v1h-7z" fill="#000"/></svg></div>
<div class="sb" style="left:800px;top:18px;width:14px;height:270px"></div>
<div class="sb" style="left:800px;top:522px;width:14px;height:14px"><svg width="14" height="14" viewBox="0 0 14 14" shape-rendering="crispEdges"><path d="M3 6h7v1h-7zM4 7h5v1h-5zM5 8h3v1h-3zM6 9h1v1h-1z" fill="#000"/></svg></div>
</div>
<div class="frame" style="left:206px;top:544px;width:818px;height:86px">
<div class="r" style="left:0px;top:0px;width:816px;height:1px;background:#808080;"></div>
<div class="r" style="left:0px;top:0px;width:1px;height:85px;background:#808080;"></div>
<div class="r" style="left:1px;top:1px;width:815px;height:1px;background:#404040;"></div>
<div class="r" style="left:1px;top:1px;width:1px;height:84px;background:#404040;"></div>
<div class="r" style="left:816px;top:2px;width:1px;height:84px;background:#d4d0c8;"></div>
<div class="r" style="left:2px;top:85px;width:815px;height:1px;background:#d4d0c8;"></div>
<a href="#" class="t" style="left:714px;top:6px;color:#0000ff;transform:scaleX(0.9267);">[メッセージ削除]</a>
<div class="tr" style="left:800px;top:2px;width:16px;height:83px"></div>
<div class="sb" style="left:800px;top:2px;width:14px;height:14px"><svg width="14" height="14" viewBox="0 0 14 14" shape-rendering="crispEdges"><path d="M6 5h1v1h-1zM5 6h3v1h-3zM4 7h5v1h-5zM3 8h7v1h-7z" fill="#fff" transform="translate(1,1)"/><path d="M6 5h1v1h-1zM5 6h3v1h-3zM4 7h5v1h-5zM3 8h7v1h-7z" fill="#808080"/></svg></div>
<div class="sb" style="left:800px;top:69px;width:14px;height:14px"><svg width="14" height="14" viewBox="0 0 14 14" shape-rendering="crispEdges"><path d="M3 6h7v1h-7zM4 7h5v1h-5zM5 8h3v1h-3zM6 9h1v1h-1z" fill="#fff" transform="translate(1,1)"/><path d="M3 6h7v1h-7zM4 7h5v1h-5zM5 8h3v1h-3zM6 9h1v1h-1z" fill="#808080"/></svg></div>
</div>
</body></html>
